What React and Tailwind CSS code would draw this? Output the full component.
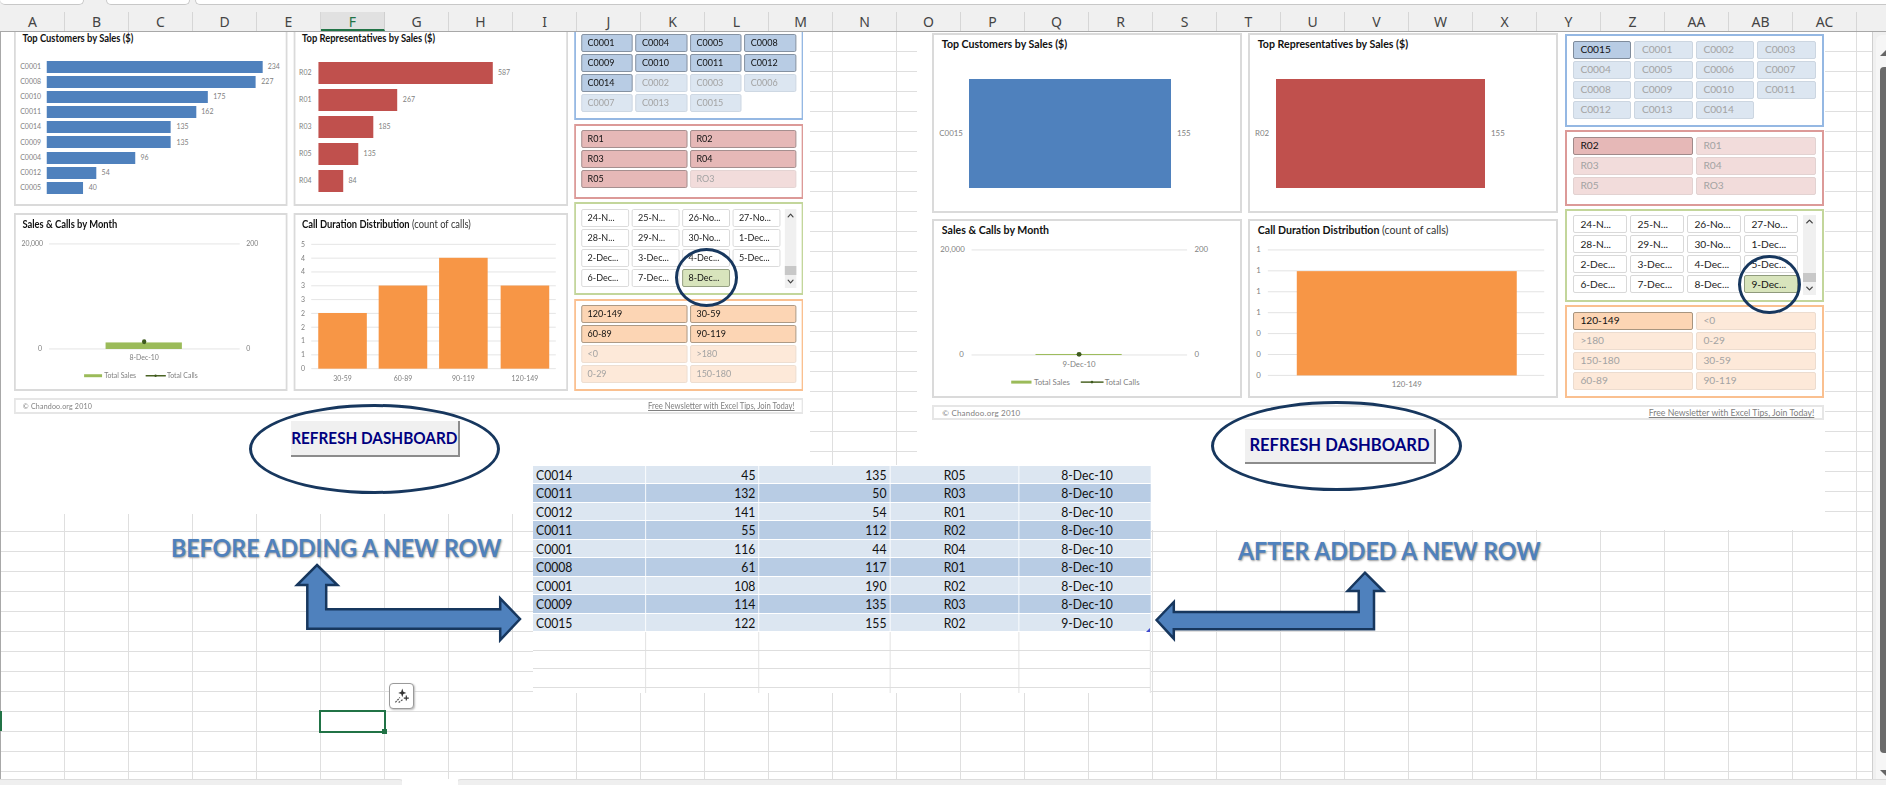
import React from "react";
import { ChevronDown, ChevronUp } from "lucide-react";

const columns = "A B C D E F G H I J K L M N O P Q R S T U V W X Y Z AA AB AC".split(" ");

const tones = {
  blue: {
    panel: "border-[#95b8e3]",
    on: "bg-[#b8cce4] border-[#7f8c9c] text-[#111]",
    off: "bg-[#dce6f1] border-[#ccd6e1] text-[#a3a3a3]",
  },
  red: {
    panel: "border-[#dc9a98]",
    on: "bg-[#e6b8b7] border-[#a08a8a] text-[#111]",
    off: "bg-[#f2dcdb] border-[#e2d2d1] text-[#a3a3a3]",
  },
  green: {
    panel: "border-[#c3d69b]",
    on: "bg-[#d8e4bc] border-[#8f9a7c] text-[#111]",
    off: "bg-white border-[#d9d9d9] text-[#222]",
  },
  orange: {
    panel: "border-[#fac090]",
    on: "bg-[#fcd5b4] border-[#a8957f] text-[#111]",
    off: "bg-[#fde9d9] border-[#ecdccf] text-[#a3a3a3]",
  },
};

const before = {
  customers: { cols: 4, on: ["C0001", "C0004", "C0005", "C0008", "C0009", "C0010", "C0011", "C0012", "C0014"], off: ["C0002", "C0003", "C0006", "C0007", "C0013", "C0015"] },
  reps: { cols: 2, on: ["R01", "R02", "R03", "R04", "R05"], off: ["RO3"] },
  dates: ["24-N...", "25-N...", "26-No...", "27-No...", "28-N...", "29-N...", "30-No...", "1-Dec...", "2-Dec...", "3-Dec...", "4-Dec...", "5-Dec...", "6-Dec...", "7-Dec...", "8-Dec..."],
  activeDate: "8-Dec...",
  calls: { cols: 2, on: ["120-149", "30-59", "60-89", "90-119"], off: ["<0", ">180", "0-29", "150-180"] },
  customerBars: {
    rows: [["C0001", 234], ["C0008", 227], ["C0010", 175], ["C0011", 162], ["C0014", 135], ["C0009", 135], ["C0004", 96], ["C0012", 54], ["C0005", 40]],
    scale: 1.043, top: 8.9, rowH: 15.08, barH: 12, labelW: 29.7, pad: 5,
  },
  repBars: {
    rows: [["R02", 587], ["R01", 267], ["R03", 185], ["R05", 135], ["R04", 84]],
    scale: 0.336, top: 8.9, rowH: 27, barH: 21.7, labelW: 21.5, pad: 4.2,
  },
  combo: { date: "8-Dec-10", barH: 6.6, dotY: 129.7, labelY: 148, legendY: 164 },
  dist: {
    labels: ["5", "4", "4", "3", "3", "2", "2", "1", "1", "0"],
    top: 31.4, step: 13.94, barW: 55.4, labelY: 169,
    bars: [["30-59", 26.6, 100.7], ["60-89", 95.5, 73], ["90-119", 164.4, 45], ["120-149", 234.6, 73]],
  },
};

const after = {
  customers: { cols: 4, on: ["C0015"], off: ["C0001", "C0002", "C0003", "C0004", "C0005", "C0006", "C0007", "C0008", "C0009", "C0010", "C0011", "C0012", "C0013", "C0014"] },
  reps: { cols: 2, on: ["R02"], off: ["R01", "R03", "R04", "R05", "RO3"] },
  dates: ["24-N...", "25-N...", "26-No...", "27-No...", "28-N...", "29-N...", "30-No...", "1-Dec...", "2-Dec...", "3-Dec...", "4-Dec...", "5-Dec...", "6-Dec...", "7-Dec...", "8-Dec...", "9-Dec..."],
  activeDate: "9-Dec...",
  calls: { cols: 2, on: ["120-149"], off: ["<0", ">180", "0-29", "150-180", "30-59", "60-89", "90-119"] },
  customerBars: { rows: [["C0015", 155]], scale: 1.305, top: 22, rowH: 108.7, barH: 108.7, labelW: 29.4, pad: 5 },
  repBars: { rows: [["R02", 155]], scale: 1.347, top: 22, rowH: 108.7, barH: 108.7, labelW: 21.3, pad: 4.7 },
  combo: { date: "9-Dec-10", barH: 1, dotY: 136.4, labelY: 149.5, legendY: 164.4 },
  dist: {
    labels: ["1", "1", "1", "1", "0", "0", "0"],
    top: 31, step: 21.1, barW: 222, labelY: 169.5,
    bars: [["120-149", 47.8, 52.4]],
  },
};

const tableRows = [
  ["C0014", 45, 135, "R05", "8-Dec-10"],
  ["C0011", 132, 50, "R03", "8-Dec-10"],
  ["C0012", 141, 54, "R01", "8-Dec-10"],
  ["C0011", 55, 112, "R02", "8-Dec-10"],
  ["C0001", 116, 44, "R04", "8-Dec-10"],
  ["C0008", 61, 117, "R01", "8-Dec-10"],
  ["C0001", 108, 190, "R02", "8-Dec-10"],
  ["C0009", 114, 135, "R03", "8-Dec-10"],
  ["C0015", 122, 155, "R02", "9-Dec-10"],
];

const ChartBox = ({ title, note, children }) => (
  <div className="flex flex-col overflow-hidden border-2 border-[#dadada] bg-white">
    <div className="h-[22px] shrink-0 pl-[7.5px] pt-[2px] text-[10.6px] leading-[14px] whitespace-nowrap text-[#111]">
      <span className="font-bold">{title}</span>
      {note && <span className="text-[#333]"> {note}</span>}
    </div>
    {children}
  </div>
);

const BarChart = ({ title, color, data }) => (
  <ChartBox title={title}>
    <div className="flex flex-col" style={{ paddingTop: data.top, paddingLeft: data.pad }}>
      {data.rows.map(([label, value]) => (
        <div key={label} className="flex items-center text-[7.9px] text-[#7f7f7f]" style={{ height: data.rowH }}>
          <span className="shrink-0" style={{ width: data.labelW }}>{label}</span>
          <div className={`shrink-0 ${color}`} style={{ width: value * data.scale, height: data.barH }} />
          <span className="ml-[6px]">{value}</span>
        </div>
      ))}
    </div>
  </ChartBox>
);

const ComboChart = ({ data }) => (
  <ChartBox title="Sales & Calls by Month">
    <svg width="307" height="154" viewBox="2 24 307 154" className="text-[7.9px]">
      <line x1="38.5" x2="256" y1="31" y2="31" stroke="#e3e3e3" />
      <line x1="38.5" x2="256" y1="137" y2="137" stroke="#e3e3e3" />
      <g className="fill-[#7f7f7f]">
        <text x="7" y="33.5">20,000</text>
        <text x="263.5" y="33.5">200</text>
        <text x="26" y="139.5">0</text>
        <text x="263.5" y="139.5">0</text>
        <text x="147" y={data.labelY} textAnchor="middle">{data.date}</text>
        <text x="101.5" y={data.legendY + 2.5}>Total Sales</text>
        <text x="173" y={data.legendY + 2.5}>Total Calls</text>
      </g>
      <rect x="103" y={137 - data.barH} width="87" height={data.barH} fill="#9bbb59" />
      <circle cx="147" cy={data.dotY} r="2.5" fill="#3e5a1e" />
      <rect x="78.5" y={data.legendY - 1.5} width="20.5" height="3" fill="#9bbb59" />
      <line x1="148.7" x2="171.7" y1={data.legendY} y2={data.legendY} stroke="#4a6324" strokeWidth="1.5" />
      <circle cx="160" cy={data.legendY} r="1.3" fill="#3e5a1e" />
    </svg>
  </ChartBox>
);

const DistChart = ({ data }) => {
  const bottom = data.top + data.step * (data.labels.length - 1);
  return (
    <ChartBox title="Call Duration Distribution" note="(count of calls)">
      <svg width="307" height="154" viewBox="2 24 307 154" className="text-[7.9px]">
        {data.labels.map((label, i) => (
          <g key={i}>
            <line x1="18.6" x2="297.5" y1={data.top + i * data.step} y2={data.top + i * data.step} stroke="#e3e3e3" />
            <text x="7" y={data.top + i * data.step + 2.5} className="fill-[#7f7f7f]">{label}</text>
          </g>
        ))}
        {data.bars.map(([label, x, y]) => (
          <g key={label}>
            <rect x={x} y={y} width={data.barW} height={bottom - y} fill="#f79646" />
            <text x={x + data.barW / 2} y={data.labelY} textAnchor="middle" className="fill-[#7f7f7f]">{label}</text>
          </g>
        ))}
      </svg>
    </ChartBox>
  );
};

const SlicerButton = ({ label, tone, active }) => (
  <div className={`flex h-[18px] items-center rounded-[2px] border pl-[6.5px] text-[10.2px] whitespace-nowrap ${active ? tone.on : tone.off}`}>
    {label}
  </div>
);

const Slicer = ({ tone, data, height }) => (
  <div className={`border-2 bg-white px-[6px] pt-[4.5px] ${tone.panel} ${height}`}>
    <div className={`grid gap-x-[3px] gap-y-[2px] ${data.cols === 4 ? "grid-cols-4" : "grid-cols-2"}`}>
      {data.on.map((label) => <SlicerButton key={label} label={label} tone={tone} active />)}
      {data.off.map((label) => <SlicerButton key={label} label={label} tone={tone} />)}
    </div>
  </div>
);

const DateSlicer = ({ dates, active }) => (
  <div className={`flex h-[92.7px] gap-[5px] border-2 bg-white px-[6px] pt-[4.5px] ${tones.green.panel}`}>
    <div className="grid flex-1 grid-cols-4 content-start gap-x-[3px] gap-y-[2px]">
      {dates.map((d) => <SlicerButton key={d} label={d} tone={tones.green} active={d === active} />)}
    </div>
    <div className="flex h-[79.7px] w-[13px] shrink-0 flex-col bg-[#f0f0f0] text-[#444]">
      <ChevronUp size={11} strokeWidth={3} className="mx-auto mt-[1px]" />
      <div className="flex-1" />
      <div className="h-[9px] bg-[#c8c8c8]" />
      <ChevronDown size={11} strokeWidth={3} className="mx-auto my-[1px]" />
    </div>
  </div>
);

const Dashboard = ({ data, className }) => (
  <div className={`absolute flex w-[892px] flex-col gap-[6.8px] ${className}`}>
    <div className="flex gap-[6.6px]">
      <div className="grid grid-cols-[309.4px_310px] grid-rows-[179.4px_178.6px] gap-[6.6px]">
        <BarChart title="Top Customers by Sales ($)" color="bg-[#4f81bd]" data={data.customerBars} />
        <BarChart title="Top Representatives by Sales ($)" color="bg-[#c0504d]" data={data.repBars} />
        <ComboChart data={data.combo} />
        <DistChart data={data.dist} />
      </div>
      <div className="flex w-[259px] flex-col pt-[1px]">
        <Slicer tone={tones.blue} data={data.customers} height="h-[92.4px]" />
        <div className="h-[3.6px]" />
        <Slicer tone={tones.red} data={data.reps} height="h-[75.7px]" />
        <div className="h-[3px]" />
        <DateSlicer dates={data.dates} active={data.activeDate} />
        <div className="h-[3.6px]" />
        <Slicer tone={tones.orange} data={data.calls} height="h-[92.4px]" />
      </div>
    </div>
    <div className="flex h-[15.7px] items-center justify-between border-2 border-[#e6e6e6] bg-white px-[8px] text-[#808080]">
      <span className="text-[8px] tracking-[0.2px]">© Chandoo.org 2010</span>
      <span className="text-[8.7px] underline">Free Newsletter with Excel Tips, Join Today!</span>
    </div>
  </div>
);

const tableCols = "grid grid-cols-[129.9px_130.3px_150.6px_148.6px_150.9px]";

const DataTable = () => (
  <div className="absolute left-[533px] top-[433.7px] w-[710.3px] origin-top-left scale-x-[.87] text-[14px] text-[#111]">
    {tableRows.map((row, i) => (
      <div
        key={i}
        className={`${tableCols} h-[18.5px] leading-[18px] ${i % 2 ? "bg-[#b8cce4]" : "bg-[#dce6f1]"} border-b-[1.5px] border-white`}
      >
        <span className="border-r-[1.5px] border-white pl-[3.5px]">{row[0]}</span>
        <span className="border-r-[1.5px] border-white pr-[3.5px] text-right">{row[1]}</span>
        <span className="border-r-[1.5px] border-white pr-[3.5px] text-right">{row[2]}</span>
        <span className="border-r-[1.5px] border-white text-center">{row[3]}</span>
        <span className="pl-[4px] text-center">{row[4]}</span>
      </div>
    ))}
    {["h-[18.5px] border-b", "h-[18.5px] border-b", "h-[18.5px] border-b", "h-[5.5px]"].map((rowClass, i) => (
      <div key={i} className={`${tableCols} ${rowClass} border-[#dedede]`}>
        <span className="border-r border-[#dedede]" />
        <span className="border-r border-[#dedede]" />
        <span className="border-r border-[#dedede]" />
        <span className="border-r border-[#dedede]" />
        <span className="border-r border-[#dedede]" />
      </div>
    ))}
  </div>
);

const Arrows = () => (
  <svg width="1873" height="747" className="pointer-events-none absolute left-0 top-0" fill="#4f81bd" stroke="#17375e" strokeWidth="2.5">
    <g transform="translate(0 -32)">
      <path d="M317 565 L337.4 585 L326.2 585 L326.2 609.3 L500.2 609.3 L500.2 598.3 L520 619 L500.2 640 L500.2 628.7 L307.3 628.7 L307.3 585 L297 585 Z" />
      <path d="M1364.9 572.7 L1383.3 591 L1374 591 L1374 629.3 L1173.8 629.3 L1173.8 638.7 L1156.6 620 L1173.8 602 L1173.8 612 L1358.7 612 L1358.7 591 L1347.6 591 Z" />
    </g>
  </svg>
);

const RefreshButton = ({ className, textClass }) => (
  <div className={`absolute flex items-center justify-center border-b-2 border-r-2 border-[#8c8c8c] bg-[#f0f0f0] font-bold text-[#000080] ${className}`}>
    <span className={`inline-block whitespace-nowrap ${textClass}`}>REFRESH DASHBOARD</span>
  </div>
);

const Heading = ({ children, className }) => (
  <div className={`absolute origin-left scale-x-[.965] whitespace-nowrap text-[24px] leading-[28px] font-bold text-[#4f81bd] [text-shadow:1px_1px_2px_#9a9a9a] ${className}`}>
    {children}
  </div>
);

const App = () => (
  <div className="flex h-[785px] w-[1886px] flex-col overflow-hidden bg-[#f0f0f0] font-['Lato',sans-serif]">
    {/* sheet tabs strip */}
    <div className="flex h-[12px] shrink-0 items-start">
      <div className="h-[5px] w-[84px] rounded-b-[6px] border-b border-r border-[#c8c8c8] bg-white" />
      <div className="ml-[22px] h-[5px] w-[84px] rounded-b-[6px] border-b border-l border-r border-[#c8c8c8] bg-white" />
      <div className="ml-[5px] h-[5px] flex-1 rounded-bl-[6px] border-b border-l border-[#c8c8c8] bg-white" />
    </div>

    {/* column headers */}
    <div className="flex h-[20px] shrink-0 border-b border-[#a8a8a8] font-['Noto_Sans',sans-serif] text-[14px] leading-[19px] text-[#444]">
      <div className="w-[1px] shrink-0" />
      {columns.map((c) => (
        <div
          key={c}
          className={`flex w-[64px] shrink-0 justify-center border-r ${c === "F" ? "border-b-2 border-r-[#cfcfcf] border-b-[#217346] bg-[#e1e1e1] text-[#217346]" : "border-[#d6d6d6]"}`}
        >
          {c}
        </div>
      ))}
    </div>

    <div className="flex h-[747px] shrink-0">
      {/* worksheet with floating pictures and shapes */}
      <div className="relative h-full w-[1873px] shrink-0 overflow-hidden border-r border-[#cfcfcf] bg-white bg-[linear-gradient(to_bottom,transparent_19px,#dfdfdf_19px,#dfdfdf_20px),linear-gradient(to_right,#dfdfdf_1px,transparent_1px)] bg-[size:64px_20px]">
        <div className="absolute bottom-0 left-0 top-0 w-[1px] bg-[#a8a8a8]" />
        <div className="absolute bottom-[48px] left-0 h-[20px] w-[2px] bg-[#217346]" />

        <div className="absolute left-[1px] top-0 h-[433px] w-[809px] bg-white" />
        <div className="absolute left-[1px] top-[433px] h-[49px] w-[532px] bg-white" />
        <div className="absolute left-[917px] top-0 h-[498px] w-[908px] bg-white" />
        <div className="absolute left-[533px] top-[433px] h-[228px] w-[618px] bg-white" />
        <div className="absolute left-[1151px] top-[433px] h-[65px] w-[674px] bg-white" />

        <Dashboard data={before} className="left-[13.8px] top-[-5.4px] origin-top-left scale-x-[.885]" />
        <Dashboard data={after} className="left-[932.3px] top-[1.3px]" />

        <div className="absolute left-[675px] top-[216px] h-[59px] w-[63px] rounded-[50%] border-[3px] border-[#17375e]" />
        <div className="absolute left-[1738px] top-[223px] h-[59px] w-[62.5px] rounded-[50%] border-[3px] border-[#17375e]" />

        <div className="absolute left-[248.7px] top-[372.3px] h-[90px] w-[251px] rounded-[50%] border-[3px] border-[#17375e]" />
        <RefreshButton className="left-[290.5px] top-[389px] h-[36px] w-[169.5px] text-[17px]" textClass="scale-x-[.9]" />
        <div className="absolute left-[1211.4px] top-[369px] h-[90px] w-[250.6px] rounded-[50%] border-[3px] border-[#17375e]" />
        <RefreshButton className="left-[1245px] top-[397px] h-[35px] w-[191px] text-[16.6px]" textClass="" />

        <Heading className="left-[171px] top-[502px]">BEFORE ADDING A NEW ROW</Heading>
        <Heading className="left-[1238px] top-[504.5px]">AFTER ADDED A NEW ROW</Heading>

        <DataTable />
        <div className="absolute left-[1146px] top-[596px] h-0 w-0 border-b-[4px] border-l-[4px] border-b-[#3f48cc] border-l-transparent" />
        <Arrows />

        {/* selected cell + quick analysis */}
        <div className="absolute left-[319px] top-[678px] h-[23px] w-[67px] border-2 border-[#217346]">
          <div className="absolute -bottom-[3px] -right-[3px] h-[5px] w-[5px] bg-[#217346]" />
        </div>
        <div className="absolute left-[389px] top-[651px] flex h-[26px] w-[25px] items-center justify-center rounded-[4px] border border-[#9a9a9a] bg-white shadow-[1px_1px_2px_#bbb]">
          <svg width="24" height="24" viewBox="0 0 24 24" fill="#333">
            <path d="M12.8 4.2 L13.9 7.6 L17 8.8 L13.9 10 L12.8 13.2 L11.7 10 L8.6 8.8 L11.7 7.6 Z" />
            <path d="M16.4 11.6 h1.2 v2 h2 v1.2 h-2 v2 h-1.2 v-2 h-2 v-1.2 h2 Z" />
            <path d="M5.6 18.6 L10.4 13.6 M9 18.8 L13.8 15.4" stroke="#555" strokeWidth="1.3" strokeDasharray="2 1" fill="none" />
          </svg>
        </div>
      </div>

      {/* vertical scrollbar */}
      <div className="relative flex-1">
        <div className="absolute bottom-0 left-[3px] right-0 top-[3px] rounded-tl-[6px] bg-[#f6f6f6]" />
        <div className="absolute left-[7px] right-0 top-[35px] h-[686px] rounded-l-[4px] bg-[#6b6b6b]" />
        <div className="absolute right-0 top-[18px] h-0 w-0 border-b-[6px] border-l-[6px] border-r-0 border-b-[#666] border-l-transparent" />
        <div className="absolute right-0 top-[738px] h-0 w-0 border-t-[6px] border-l-[6px] border-t-[#666] border-l-transparent" />
      </div>
    </div>

    {/* horizontal scrollbar strip */}
    <div className="flex h-[6px] shrink-0">
      <div className="w-[402px] rounded-tr-[3px] border-t border-[#dcdcdc] bg-[#efefef]" />
      <div className="w-[56px] bg-white" />
      <div className="flex-1 rounded-tl-[3px] border-t border-[#dcdcdc] bg-[#efefef]" />
    </div>
  </div>
);

export default App;
